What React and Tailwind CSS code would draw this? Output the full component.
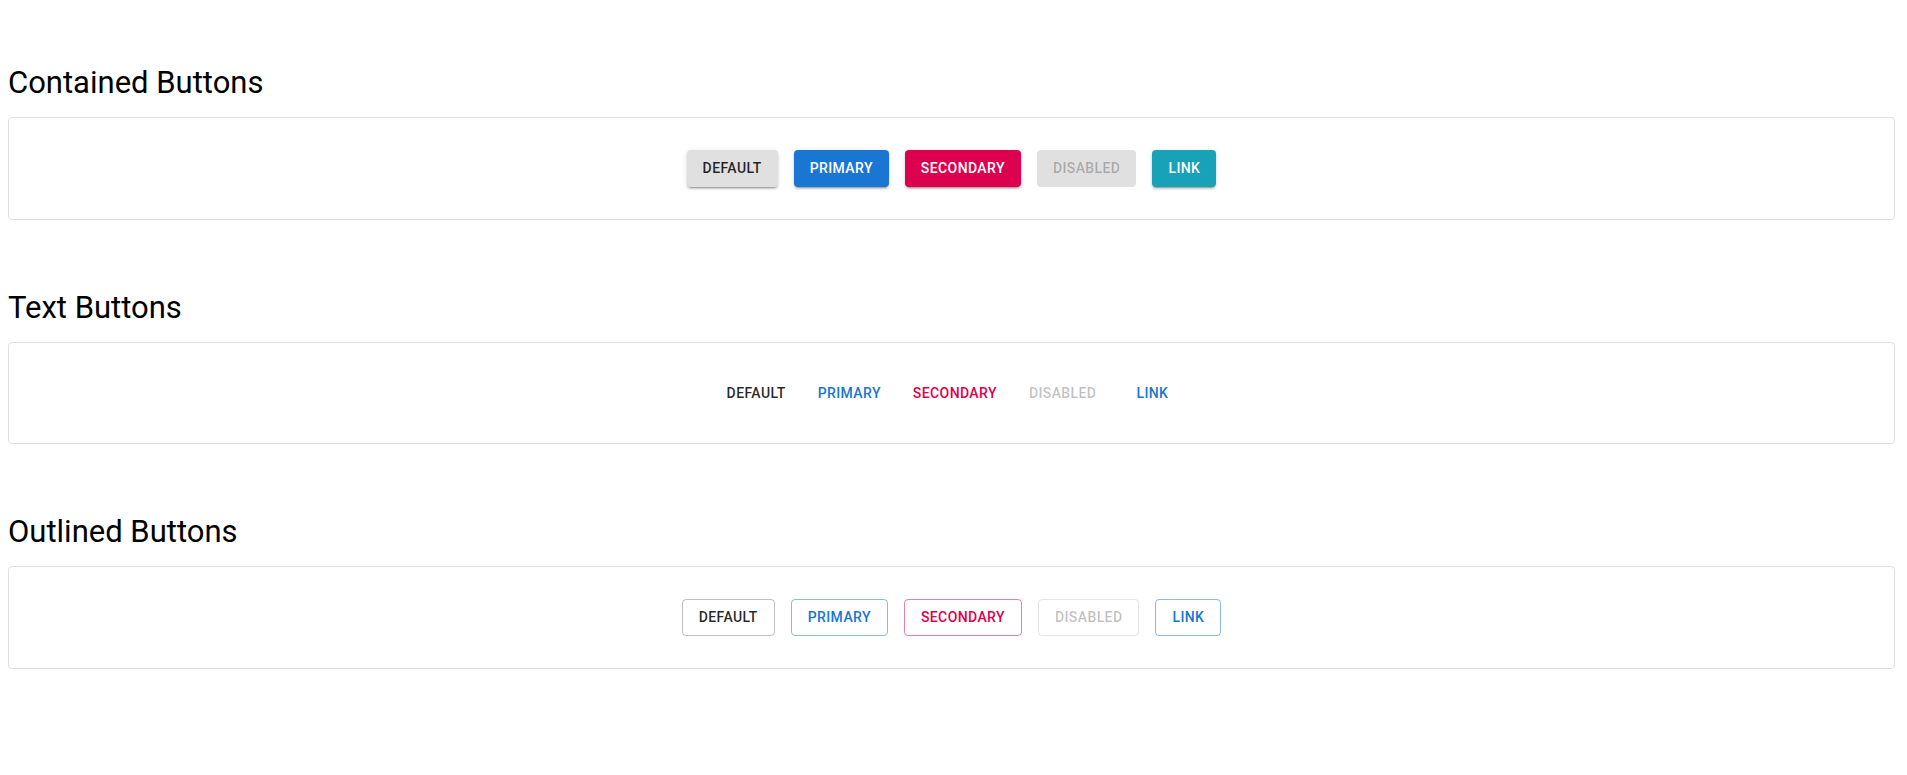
import React from "react";

const font = { fontFamily: "Roboto, 'Liberation Sans', sans-serif" };

const base =
  "h-[36.5px] min-w-[64px] rounded-[4px] text-[14px] font-medium leading-[24.5px] tracking-[0.4px] uppercase";

const raised =
  "shadow-[0_3px_1px_-2px_rgba(0,0,0,0.2),0_2px_2px_0_rgba(0,0,0,0.14),0_1px_5px_0_rgba(0,0,0,0.12)]";

const contained = [
  { label: "Default", cls: `bg-[#e0e0e0] text-black/85 ${raised}` },
  { label: "Primary", cls: `bg-[#1976d2] text-white ${raised}` },
  { label: "Secondary", cls: `bg-[#dc004e] text-white ${raised}` },
  { label: "Disabled", cls: "bg-[#e0e0e0] text-black/25" },
  { label: "Link", cls: `bg-[#17a2b8] text-white ${raised}` },
];

const text = [
  { label: "Default", cls: "text-black/85" },
  { label: "Primary", cls: "text-[#1976d2]" },
  { label: "Secondary", cls: "text-[#dc004e]" },
  { label: "Disabled", cls: "text-black/25" },
  { label: "Link", cls: "text-[#1976d2]" },
];

const outlined = [
  { label: "Default", cls: "border-black/25 text-black/85" },
  { label: "Primary", cls: "border-[#1976d2]/50 text-[#1976d2]" },
  { label: "Secondary", cls: "border-[#dc004e]/50 text-[#dc004e]" },
  { label: "Disabled", cls: "border-black/10 text-black/25" },
  { label: "Link", cls: "border-[#1976d2]/50 text-[#1976d2]" },
];

function Section({ title, className, children }) {
  return (
    <section className={className}>
      <h4 className="mb-[15px] text-[31px] font-normal leading-[38px] text-black">{title}</h4>
      <div className="flex items-center justify-center gap-4 rounded-[4px] border border-[#e0e0e0] p-8">
        {children}
      </div>
    </section>
  );
}

export default function App() {
  return (
    <div className="min-h-screen bg-white pl-2 pr-3 pt-[64px] pb-10" style={font}>
      <Section title="Contained Buttons">
        {contained.map((b) => (
          <button key={b.label} className={`${base} px-4 ${b.cls}`}>
            {b.label}
          </button>
        ))}
      </Section>

      <Section title="Text Buttons" className="mt-[69px]">
        {text.map((b) => (
          <button key={b.label} className={`${base} px-2 ${b.cls}`}>
            {b.label}
          </button>
        ))}
      </Section>

      <Section title="Outlined Buttons" className="mt-[69px]">
        {outlined.map((b) => (
          <button key={b.label} className={`${base} border px-4 py-[5px] ${b.cls}`}>
            {b.label}
          </button>
        ))}
      </Section>
    </div>
  );
}
